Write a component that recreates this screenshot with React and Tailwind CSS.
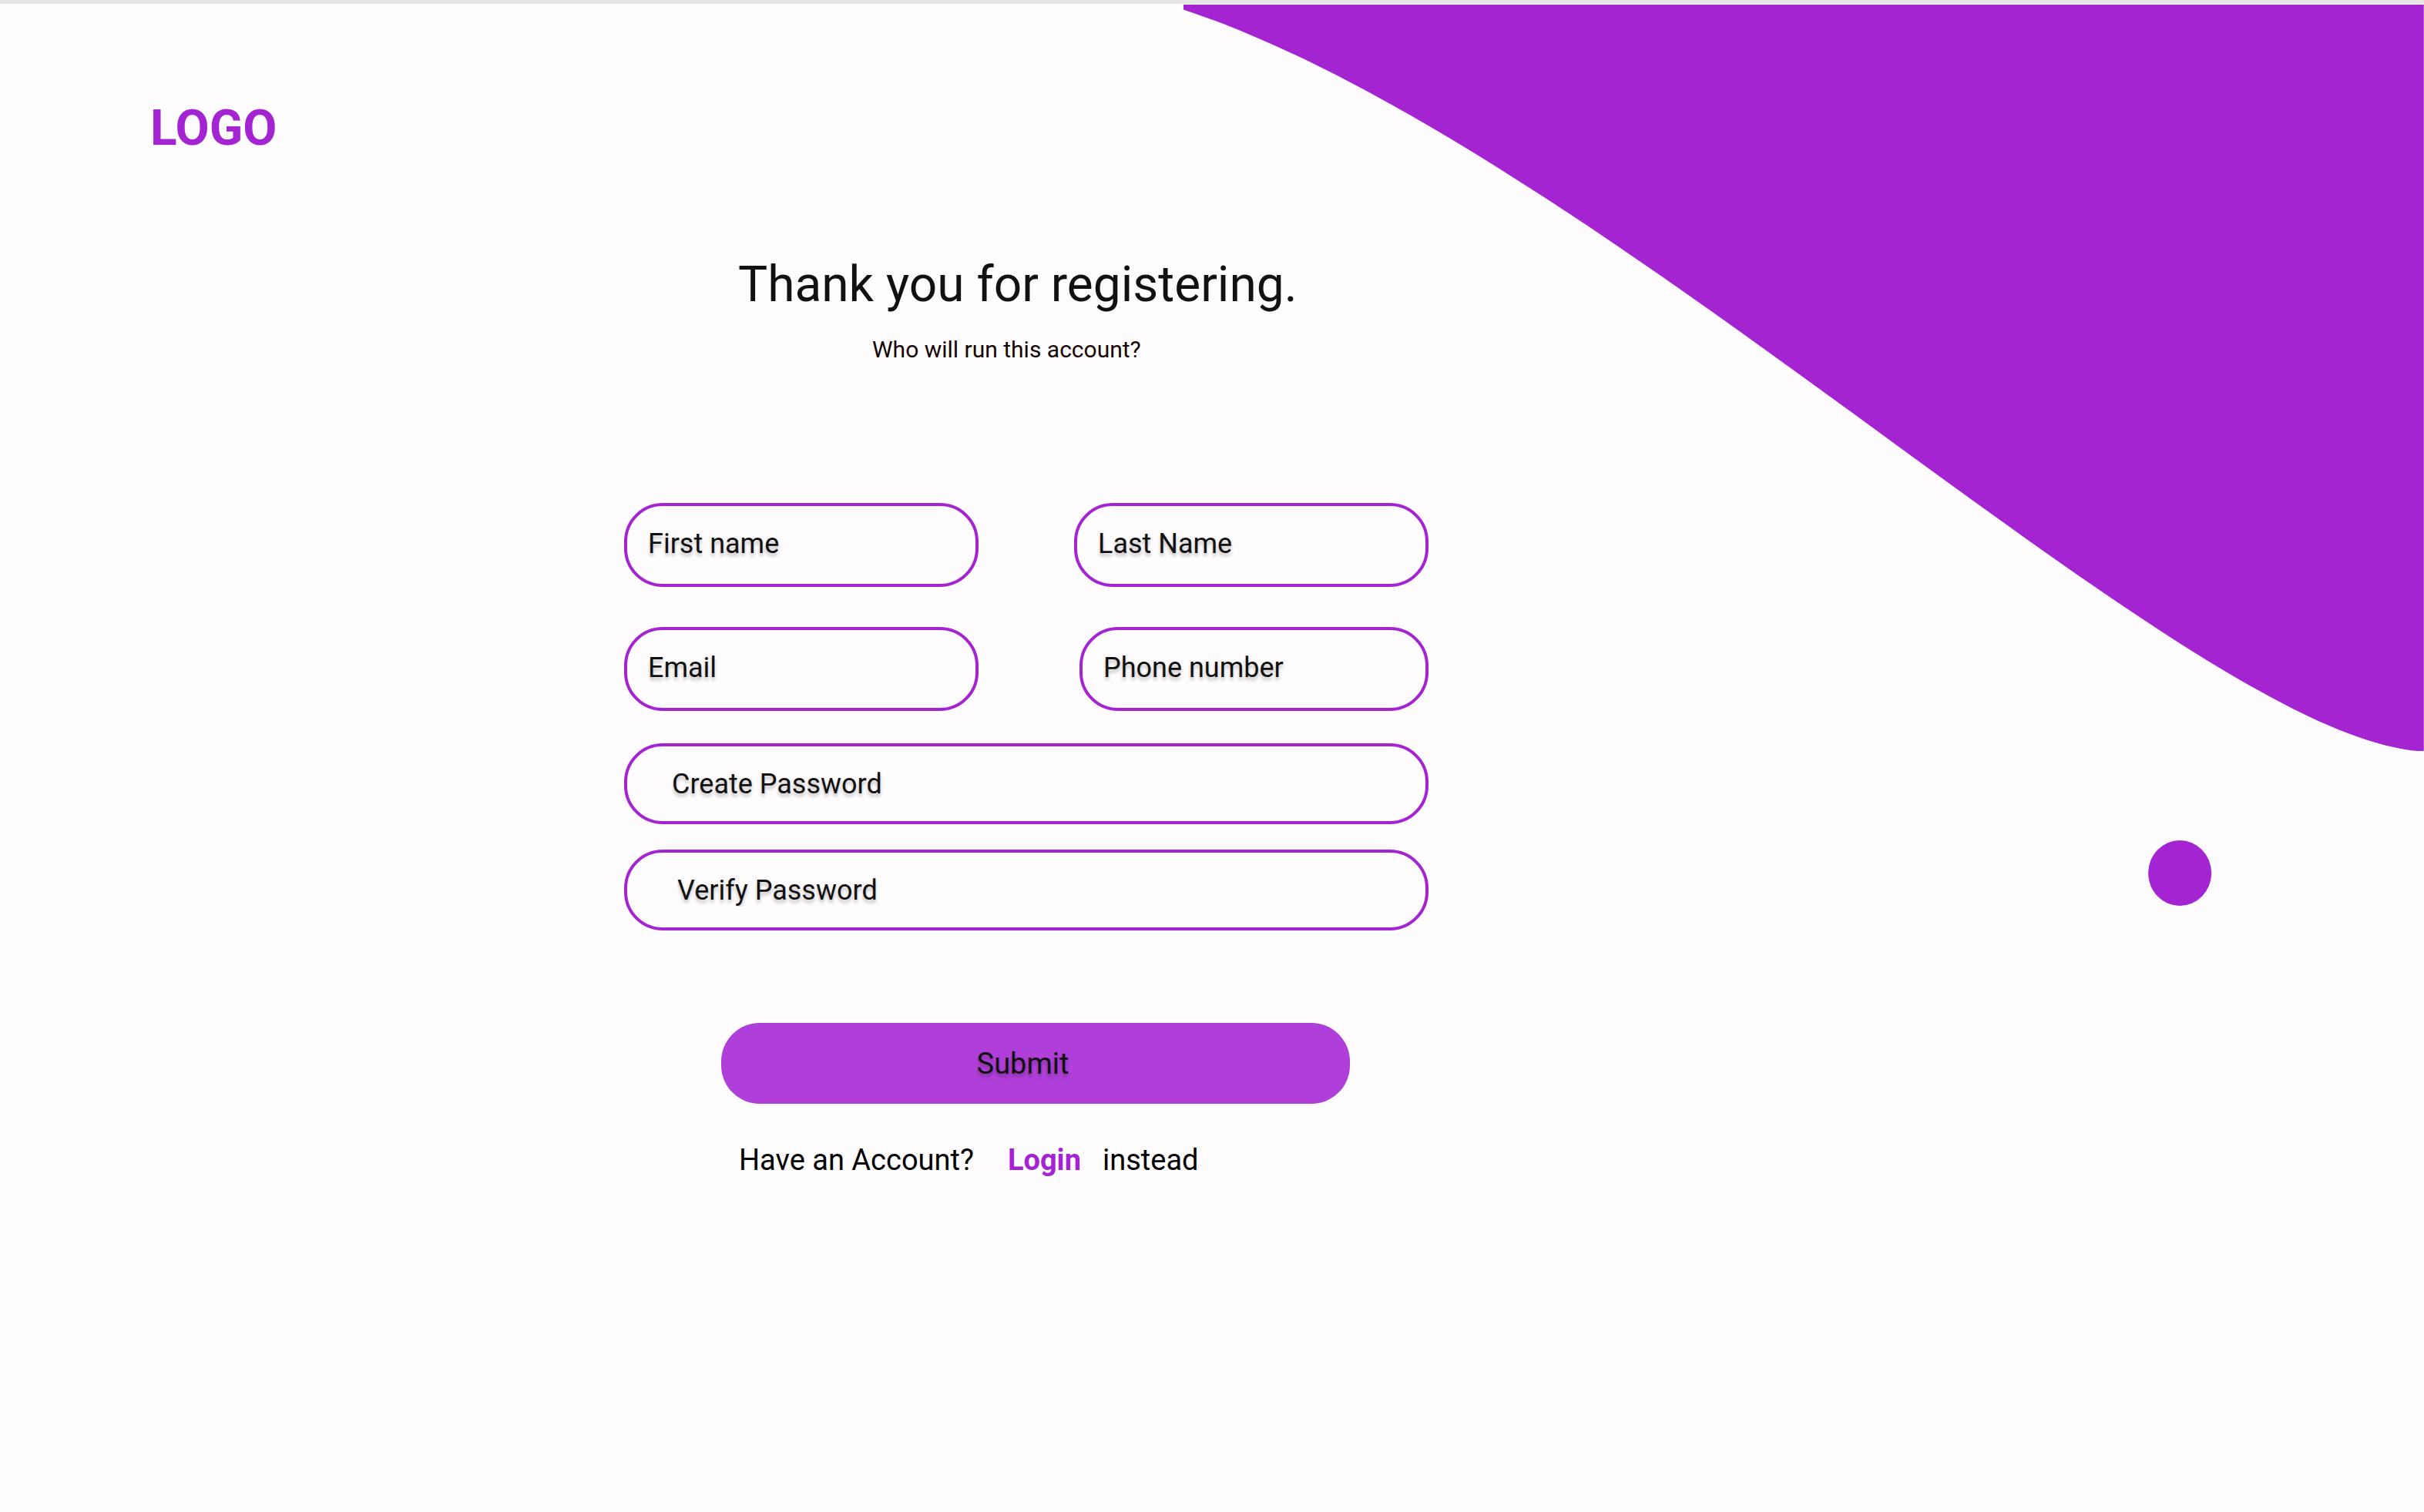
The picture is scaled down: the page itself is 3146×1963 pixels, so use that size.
const fieldBase =
  "w-full min-w-0 rounded-[50px] border-4 border-[#a524d2] bg-transparent text-[36px] leading-[44px] text-[#111111] outline-none text-shadow-[0_4px_4px_rgba(0,0,0,0.25)] placeholder:text-[#111111] placeholder:opacity-100 focus:ring-4 focus:ring-[#a524d2]/30";

function Field({ label, className, ...props }) {
  return (
    <input
      aria-label={label}
      placeholder={label}
      className={`${fieldBase} ${className}`}
      {...props}
    />
  );
}

function Backdrop() {
  return (
    <svg
      aria-hidden="true"
      viewBox="0 0 1610 1171"
      className="pointer-events-none absolute top-[5px] right-0 w-[51.2%]"
    >
      <rect x="0" y="0" width="1610" height="1" fill="#ffffff" />
      <path
        d="M1 1V7.5C537 184.5 1297 943 1602 969.5H1610V1Z"
        fill="#a524d2"
      />
      <ellipse cx="1293.5" cy="1128" rx="41" ry="42.5" fill="#a524d2" />
    </svg>
  );
}

export default function App() {
  return (
    <div className="relative min-h-screen overflow-hidden border-t-5 border-[#e5e5e5] bg-[#fefcfd] font-[Roboto,sans-serif]">
      <div className="absolute inset-0 -top-[5px]">
        <Backdrop />
      </div>

      <header className="relative px-[195px] pt-[122px]">
        <a href="#home" className="block w-fit text-[64px] leading-[80px] font-bold text-[#a524d2]">
          LOGO
        </a>
      </header>

      <main className="relative grid grid-cols-[810fr_1044fr_1292fr] pt-[123px]">
        <section className="col-start-2">
          <h1 className="pl-[148px] text-[64px] leading-[80px] whitespace-nowrap text-[#111111]">
            Thank you for registering.
          </h1>
          <p className="mt-[26px] pl-[322px] text-[30px] leading-[36px] whitespace-nowrap text-[#150404]">
            Who will run this account?
          </p>

          <form className="mt-[181px]" onSubmit={(e) => e.preventDefault()}>
            <div className="flex gap-[124px]">
              <Field label="First name" type="text" name="firstName" className="h-[109px] flex-1 px-[27px] pb-[3px]" />
              <Field label="Last Name" type="text" name="lastName" className="h-[109px] flex-1 px-[27px] pb-[3px]" />
            </div>
            <div className="mt-[52px] grid grid-cols-[460fr_453fr] gap-[131px]">
              <Field label="Email" type="email" name="email" className="h-[109px] px-[27px] pb-[3px]" />
              <Field label="Phone number" type="tel" name="phone" className="h-[109px] px-[27px] pb-[3px]" />
            </div>
            <div className="mt-[42px] flex flex-col gap-[33px]">
              <Field label="Create Password" type="password" name="password" className="h-[105px] px-[58px]" />
              <Field label="Verify Password" type="password" name="verifyPassword" className="h-[105px] px-[65px]" />
            </div>
            <div className="mt-[120px] pr-[102px] pl-[126px]">
              <button
                type="submit"
                className="h-[105px] w-full rounded-[50px] bg-[#b03fd9] pr-[33px] text-[38px] leading-[44px] text-[#111111] text-shadow-[0_4px_4px_rgba(0,0,0,0.25)]"
              >
                Submit
              </button>
            </div>
          </form>

          <p className="mt-[50px] flex pl-[149px] text-[38px] leading-[46px] whitespace-nowrap text-black">
            <span>Have an Account?</span>
            <a href="#login" className="ml-[44px] font-bold text-[#a524d2]">
              Login
            </a>
            <span className="ml-[28px]">instead</span>
          </p>
        </section>
      </main>
    </div>
  );
}
